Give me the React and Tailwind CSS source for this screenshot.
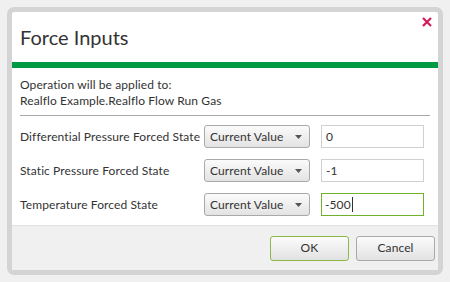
import React from 'react'

const rows = [
  { label: 'Differential Pressure Forced State', value: '0' },
  { label: 'Static Pressure Forced State', value: '-1' },
  { label: 'Temperature Forced State', value: '-500', active: true },
]

const Dropdown = () => (
  <div className="flex h-[23px] w-[106px] items-center justify-between rounded-[3px] border border-[#a9a9a9] bg-gradient-to-b from-[#fbfbfb] to-[#e3e3e3] pl-[5px] pr-[7px]">
    <span>Current Value</span>
    <svg width="7" height="4" viewBox="0 0 7 4">
      <path d="M0 0h7L3.5 4z" fill="#555" />
    </svg>
  </div>
)

const App = () => {
  return (
    <div className="h-[282px] w-[450px] bg-[#f0f0f0] p-[7px] text-[12px] tracking-[0.1px] text-[#333] [font-family:Lato,sans-serif]">
      <div className="flex h-[268px] flex-col overflow-hidden rounded-[7px] border-[5px] border-[#d4d4d4] bg-white">
        <div className="relative h-[50px] px-[8px] pt-[12px]">
          <h1 className="text-[20px] leading-[26px] tracking-normal text-[#333]">Force Inputs</h1>
          <svg className="absolute right-[6px] top-[5px]" width="10" height="10" viewBox="0 0 10 10">
            <path d="M1 1L9 9M9 1L1 9" stroke="#d41a5b" strokeWidth="2.2" />
          </svg>
        </div>
        <div className="h-[6px] bg-[#009a44]" />
        <div className="flex-1 px-[8px]">
          <div className="border-b border-[#a8a8a8] pb-[6px] pt-[9px] leading-[16px]">
            <p>Operation will be applied to:</p>
            <p>Realflo Example.Realflo Flow Run Gas</p>
          </div>
          <div className="flex flex-col gap-[11px] pt-[9px]">
            {rows.map((r) => (
              <div key={r.label} className="flex items-center">
                <span className="w-[184px] whitespace-nowrap">{r.label}</span>
                <Dropdown />
                {r.active ? (
                  <div className="ml-[11px] flex h-[23px] w-[103px] items-center px-[4px] shadow-[inset_0_0_0_1px_#6fb12a]">
                    {r.value}
                    <span className="ml-[1px] h-[15px] w-px bg-[#333]" />
                  </div>
                ) : (
                  <div className="ml-[11px] flex h-[23px] w-[103px] items-center border border-[#d0d0d0] px-[4px]">
                    {r.value}
                  </div>
                )}
              </div>
            ))}
          </div>
        </div>
        <div className="flex h-[45px] items-center justify-end gap-[7px] border-t border-[#e2e2e2] bg-[#f0f0f0] pr-[3px]">
          <button className="h-[25px] w-[79px] rounded-[3px] border border-[#8cb84a] bg-gradient-to-b from-[#fbfbfb] to-[#e2e2e2]">
            OK
          </button>
          <button className="h-[25px] w-[79px] rounded-[3px] border border-[#a9a9a9] bg-gradient-to-b from-[#fbfbfb] to-[#e2e2e2]">
            Cancel
          </button>
        </div>
      </div>
    </div>
  )
}

export default App
